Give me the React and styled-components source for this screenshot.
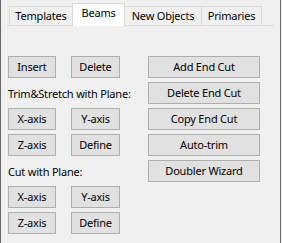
import React from "react";
import styled, { createGlobalStyle } from "styled-components";

const Global = createGlobalStyle`
  html, body { margin: 0; padding: 0; background: #f0f0f0; }
  body { font-family: "Noto Sans", "Open Sans", sans-serif; }
`;

const Frame = styled.div`
  box-sizing: border-box;
  width: 281px;
  height: 243px;
  background: #f0f0f0;
  border-left: 1px solid #6b6b6b;
  border-right: 1px solid #6b6b6b;
  display: flex;
  flex-direction: column;
  font-family: "Noto Sans", "Open Sans", sans-serif;
  font-size: 11px;
  letter-spacing: -0.2px;
  color: #000;
`;

const TabBar = styled.div`
  box-sizing: border-box;
  margin-left: 6px;
  width: 267px;
  height: 26px;
  border-bottom: 1px solid #dadada;
  display: flex;
  align-items: flex-end;
  padding-left: 2px;
`;

const Tab = styled.div`
  box-sizing: border-box;
  width: ${(p) => p.$w}px;
  height: ${(p) => (p.$active ? 23 : 19)}px;
  margin-right: -1px;
  margin-bottom: ${(p) => (p.$active ? -1 : 0)}px;
  border: 1px solid #d9d9d9;
  border-bottom: none;
  background: ${(p) => (p.$active ? "#ffffff" : "#f0f0f0")};
  position: relative;
  z-index: ${(p) => (p.$active ? 1 : 0)};
  display: flex;
  justify-content: center;
  align-items: flex-start;
  padding-top: 1px;
  line-height: 15px;
  white-space: nowrap;
`;

const Grid = styled.div`
  display: grid;
  grid-template-columns: 48px 49px 125px;
  grid-template-rows: repeat(7, 22px);
  column-gap: 15px;
  row-gap: 4px;
  padding: 30px 0 0 7px;
`;

const Button = styled.div`
  box-sizing: border-box;
  grid-column: ${(p) => p.$col};
  grid-row: ${(p) => p.$row};
  height: 22px;
  background: #e1e1e1;
  border: 1px solid #adadad;
  display: flex;
  align-items: center;
  justify-content: center;
  white-space: nowrap;
  line-height: 20px;
`;

const Wide = styled(Button)`
  margin-left: 13px;
  width: 112px;
`;

const Label = styled.div`
  grid-column: 1 / span 2;
  grid-row: ${(p) => p.$row};
  line-height: 22px;
  white-space: nowrap;
  padding-top: 1px;
`;

const tabs = [
  { t: "Templates", w: 64 },
  { t: "Beams", w: 53, active: true },
  { t: "New Objects", w: 78 },
  { t: "Primaries", w: 61 },
];

export default function App() {
  return (
    <>
      <Global />
      <Frame>
        <TabBar>
          {tabs.map((x) => (
            <Tab key={x.t} $w={x.w} $active={x.active}>
              {x.t}
            </Tab>
          ))}
        </TabBar>
        <Grid>
          <Button $col={1} $row={1}>Insert</Button>
          <Button $col={2} $row={1}>Delete</Button>
          <Label $row={2}>Trim&amp;Stretch with Plane:</Label>
          <Button $col={1} $row={3}>X-axis</Button>
          <Button $col={2} $row={3}>Y-axis</Button>
          <Button $col={1} $row={4}>Z-axis</Button>
          <Button $col={2} $row={4}>Define</Button>
          <Label $row={5}>Cut with Plane:</Label>
          <Button $col={1} $row={6}>X-axis</Button>
          <Button $col={2} $row={6}>Y-axis</Button>
          <Button $col={1} $row={7}>Z-axis</Button>
          <Button $col={2} $row={7}>Define</Button>
          <Wide $col={3} $row={1}>Add End Cut</Wide>
          <Wide $col={3} $row={2}>Delete End Cut</Wide>
          <Wide $col={3} $row={3}>Copy End Cut</Wide>
          <Wide $col={3} $row={4}>Auto-trim</Wide>
          <Wide $col={3} $row={5}>Doubler Wizard</Wide>
        </Grid>
      </Frame>
    </>
  );
}
